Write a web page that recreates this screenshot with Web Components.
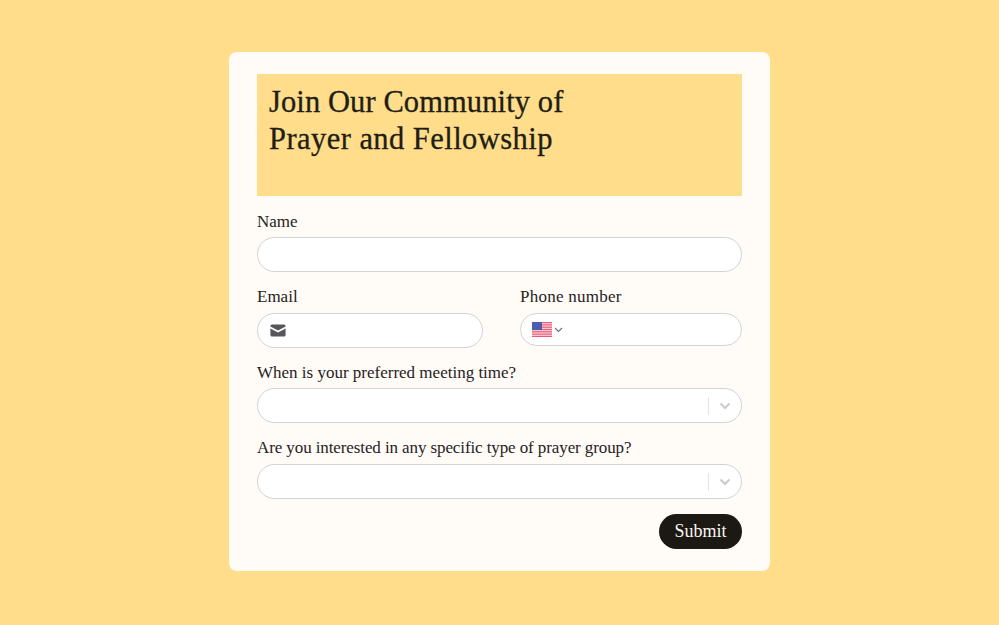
<!DOCTYPE html>
<html lang="en">
<head>
<meta charset="utf-8">
<title>Join Our Community</title>
<style>
  html, body { margin: 0; height: 100%; }
  body {
    background: #ffdd8b;
    color: #1c1917;
    font-family: "Liberation Serif", serif;
  }
  field-row form-field { height: 75px; --label-height: 24px; }
</style>
</head>
<body>
<signup-page>
  <signup-header>Join Our Community of<br><span style="letter-spacing: .45px">Prayer and Fellowship</span></signup-header>
  <form-field label="Name"><text-box></text-box></form-field>
  <field-row>
    <form-field label="Email"><text-box icon="mail"></text-box></form-field>
    <form-field label="Phone number" style="--label-spacing: .25px"><phone-box></phone-box></form-field>
  </field-row>
  <form-field label="When is your preferred meeting time?"><select-box></select-box></form-field>
  <form-field label="Are you interested in any specific type of prayer group?" style="--label-spacing: -.1px; --label-height: 24px"><select-box></select-box></form-field>
  <submit-button>Submit</submit-button>
</signup-page>

<script>
class SignupPage extends HTMLElement {
  constructor() {
    super();
    this.attachShadow({ mode: "open" });
    this.shadowRoot.innerHTML = /* html */`
    <style>
      :host {
        display: flex;
        justify-content: center;
        padding-top: 52px;
      }
      .card {
        box-sizing: border-box;
        width: 541px;
        height: 519px;
        padding: 22px 28px 22px 28px;
        background: #fffbf7;
        border-radius: 8px;
        display: flex;
        flex-direction: column;
      }
    </style>
    <div class="card"><slot></slot></div>`;
  }
}

class SignupHeader extends HTMLElement {
  constructor() {
    super();
    this.attachShadow({ mode: "open" });
    this.shadowRoot.innerHTML = /* html */`
    <style>
      :host {
        display: block;
        box-sizing: border-box;
        height: 122px;
        margin-bottom: 13px;
        padding: 10px 12px;
        background: #ffdd8b;
        font-size: 30.5px;
        letter-spacing: .1px;
        line-height: 37px;
        -webkit-text-stroke: .3px #221d14;
        color: #221d14;
      }
    </style>
    <slot></slot>`;
  }
}

class FieldRow extends HTMLElement {
  constructor() {
    super();
    this.attachShadow({ mode: "open" });
    this.shadowRoot.innerHTML = /* html */`
    <style>
      :host {
        display: grid;
        grid-template-columns: 226px 222px;
        justify-content: space-between;
      }
    </style>
    <slot></slot>`;
  }
}

class FormField extends HTMLElement {
  constructor() {
    super();
    this.attachShadow({ mode: "open" });
    this.shadowRoot.innerHTML = /* html */`
    <style>
      :host {
        display: block;
        height: 76px;
      }
      label {
        display: block;
        height: 24px;
        margin-bottom: 4px;
        font-size: 17px;
        letter-spacing: var(--label-spacing, 0);
        line-height: var(--label-height, 25px);
        color: #26221e;
      }
    </style>
    <label></label>
    <slot></slot>`;
    this.shadowRoot.querySelector("label").textContent = this.getAttribute("label");
  }
}

const BOX_STYLES = /* css */`
  :host { display: block; }
  .box {
    box-sizing: border-box;
    height: 35px;
    display: flex;
    align-items: center;
    background: #fff;
    border: 1px solid #d1d3d6;
    border-radius: 18px;
  }
`;

class TextBox extends HTMLElement {
  constructor() {
    super();
    this.attachShadow({ mode: "open" });
    const icon = this.getAttribute("icon") === "mail" ? /* html */`
      <svg width="16" height="13" viewBox="0 0 16 13">
        <path fill="#57575a" d="M2 .5h12A1.6 1.6 0 0 1 15.6 2v.6L8 6.6.4 2.6V2A1.6 1.6 0 0 1 2 .5z"/>
        <path fill="#57575a" d="M.4 4.4 8 8.4l7.6-4V11A1.6 1.6 0 0 1 14 12.6H2A1.6 1.6 0 0 1 .4 11z"/>
      </svg>` : "";
    this.shadowRoot.innerHTML = /* html */`
    <style>
      ${BOX_STYLES}
      .box { padding-left: 12px; }
      svg { display: block; }
    </style>
    <div class="box">${icon}</div>`;
  }
}

class PhoneBox extends HTMLElement {
  constructor() {
    super();
    this.attachShadow({ mode: "open" });
    const stripes = [];
    for (let i = 0; i < 7; i++) {
      stripes.push(`<rect x="0" y="${i * 2}" width="20" height="1" fill="#ea5a74"/>`);
    }
    this.shadowRoot.innerHTML = /* html */`
    <style>
      ${BOX_STYLES}
      .box {
        height: 33px;
        padding-left: 11px;
        gap: 2px;
      }
      svg { display: block; }
    </style>
    <div class="box">
      <svg width="20" height="15" viewBox="0 0 20 13" preserveAspectRatio="none">
        <rect width="20" height="13" fill="#fbd5db"/>
        ${stripes.join("")}
        <rect width="10" height="7" fill="#4a5fb0"/>
      </svg>
      <svg width="9" height="6" viewBox="0 0 9 6">
        <path d="M1 1l3.5 3.5L8 1" fill="none" stroke="#6b7075" stroke-width="1.1"/>
      </svg>
    </div>`;
  }
}

class SelectBox extends HTMLElement {
  constructor() {
    super();
    this.attachShadow({ mode: "open" });
    this.shadowRoot.innerHTML = /* html */`
    <style>
      ${BOX_STYLES}
      .box { justify-content: flex-end; padding-right: 10px; }
      .sep {
        width: 1px;
        height: 18px;
        background: #e3e4e6;
        margin-right: 10px;
      }
      svg { display: block; }
    </style>
    <div class="box">
      <span class="sep"></span>
      <svg width="12" height="8" viewBox="0 0 12 8">
        <path d="M1.5 1.5 6 6l4.5-4.5" fill="none" stroke="#c9cbce" stroke-width="2"/>
      </svg>
    </div>`;
  }
}

class SubmitButton extends HTMLElement {
  constructor() {
    super();
    this.attachShadow({ mode: "open" });
    this.shadowRoot.innerHTML = /* html */`
    <style>
      :host {
        display: block;
        align-self: flex-end;
        margin-top: 2px;
      }
      button {
        display: block;
        box-sizing: border-box;
        width: 83px;
        height: 35px;
        padding: 0;
        border: none;
        border-radius: 18px;
        background: #1c1814;
        color: #fbf7f0;
        font: 18px/35px "Liberation Serif", serif;
      }
    </style>
    <button type="button"><slot></slot></button>`;
  }
}

customElements.define("signup-page", SignupPage);
customElements.define("signup-header", SignupHeader);
customElements.define("field-row", FieldRow);
customElements.define("form-field", FormField);
customElements.define("text-box", TextBox);
customElements.define("phone-box", PhoneBox);
customElements.define("select-box", SelectBox);
customElements.define("submit-button", SubmitButton);
</script>
</body>
</html>
